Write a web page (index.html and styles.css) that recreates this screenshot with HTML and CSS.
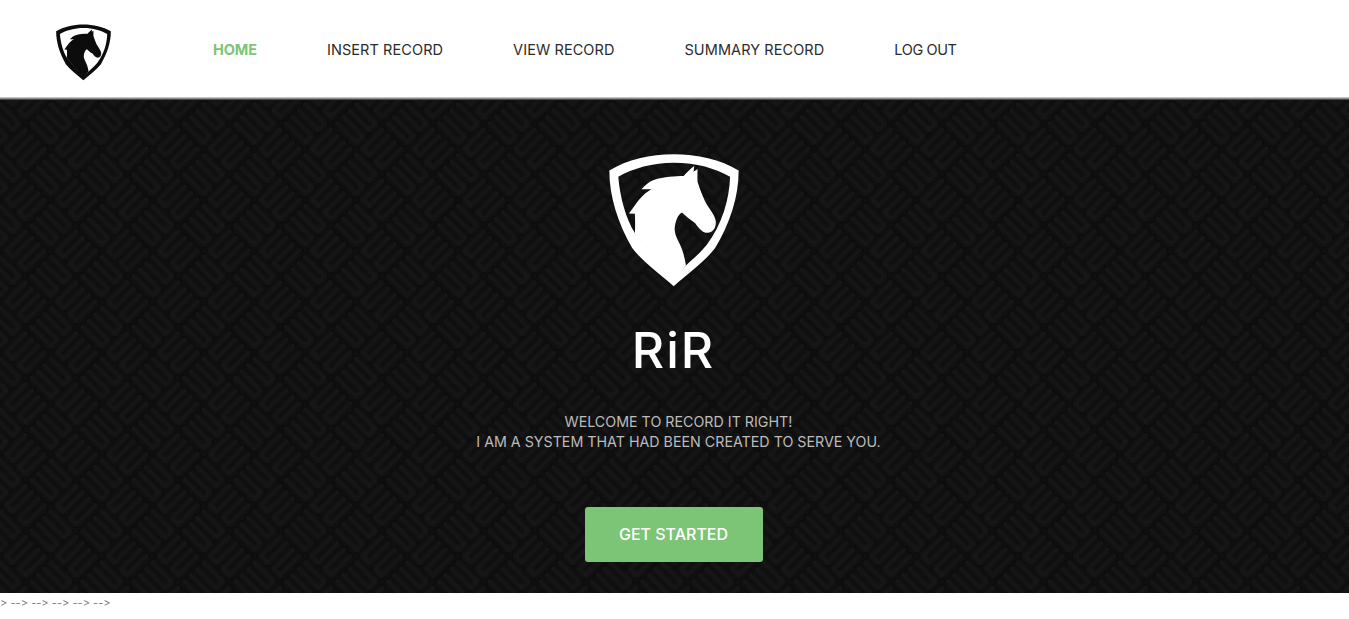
FILE: index.html
```html
<!DOCTYPE html>
<html lang="en">
<head>
  <meta charset="UTF-8">
  <meta name="viewport" content="width=device-width, initial-scale=1.0">
  <title>Record it Right</title>
  <link rel="stylesheet" href="styles.css">
</head>
<body>

  <!-- Logo, used in the header and in the hero -->
  <svg class="defs" width="0" height="0" aria-hidden="true">
    <symbol id="rir-logo" viewBox="55 42 392 400">
      <path fill-rule="evenodd" d="M56 91 C110 58 180 42 250 42 C320 42 392 58 446 91 C446 170 420 250 375 325 C345 365 295 400 250 440 C205 400 155 365 125 325 C82 250 56 170 56 91 Z M83 110 C125 85 190 68 250 68 C320 68 375 85 420 110 C418 180 395 255 350 315 C325 345 305 360 287 378 L250 420 L133 280 C105 235 88 170 83 110 Z"/>
      <path d="M133 282 C134 260 134 240 133 222 L115 221 C125 208 135 192 145 180 C158 165 170 155 183 148 L153 148 C165 135 175 125 190 120 C220 110 255 108 280 108 C290 98 300 86 312 78 L310 95 L322 87 C322 100 321 112 322 125 C330 150 338 170 345 185 C355 205 375 225 377 245 C378 265 368 278 352 279 C338 279 328 268 315 250 C300 240 285 228 275 218 C262 225 254 245 253 270 C255 295 270 310 277 335 C282 350 285 365 287 378 L250 425 Z"/>
    </symbol>
  </svg>

  <header class="topbar">
    <a class="brand" href="#"><svg class="brand-logo"><use href="#rir-logo"/></svg></a>
    <nav class="menu">
      <a class="menu-item active" href="#">HOME</a>
      <a class="menu-item" href="#">INSERT RECORD</a>
      <a class="menu-item" href="#">VIEW RECORD</a>
      <a class="menu-item" href="#">SUMMARY RECORD</a>
      <a class="menu-item tight" href="#">LOG OUT</a>
    </nav>
  </header>

  <section class="hero">
    <!-- Maze texture behind the hero -->
    <svg class="hero-bg" width="100%" height="100%" aria-hidden="true">
      <defs>
        <filter id="soft">
          <feGaussianBlur stdDeviation="0.9"/>
        </filter>
        <pattern id="maze" width="72" height="72" patternUnits="userSpaceOnUse" patternTransform="rotate(45)">
          <rect width="72" height="72" fill="#0f0f0f"/>
          <g filter="url(#soft)">
            <path transform="scale(9)" d="M.5 .5H3.5V1.5H.5M.5 2.5H3.5V3.5H.5M4.5 .5V3.5H5.5V.5M6.5 .5V3.5H7.5V.5M.5 4.5V7.5H1.5V4.5M2.5 4.5V7.5H3.5V4.5M4.5 4.5H7.5V5.5H4.5M4.5 6.5H7.5V7.5H4.5" fill="none" stroke="#171717" stroke-width=".55" stroke-linecap="round" stroke-linejoin="round"/>
          </g>
        </pattern>
      </defs>
      <rect width="100%" height="100%" fill="url(#maze)"/>
    </svg>

    <div class="hero-content">
      <svg class="hero-logo"><use href="#rir-logo"/></svg>
      <h1 class="hero-title">RiR</h1>
      <p class="hero-text">WELCOME TO RECORD IT RIGHT!<br>I AM A SYSTEM THAT HAD BEEN CREATED TO SERVE YOU.</p>
      <a class="hero-button" href="#">GET STARTED</a>
    </div>
  </section>

  <div class="stray">&gt; --&gt; --&gt; --&gt; --&gt; --&gt;</div>

</body>
</html>
```

FILE: styles.css
```css
/* Base */
body {
  margin: 0;
  background-color: #fff;
  font-family: Inter, "Open Sans", sans-serif;
  color: #333;
  overflow: hidden;
}

a {
  text-decoration: none;
}

.defs {
  display: block;
  height: 0;
}

/* Header */
.topbar {
  display: flex;
  align-items: center;
  height: 97px;
  padding-left: 56px;
  background-color: #fff;
  border-bottom: 1px solid #c4c4c4;
}

.brand {
  display: flex;
  margin-right: 102px;
}

.brand-logo {
  display: block;
  width: 55px;
  height: 57px;
  margin-top: 7px;
  fill: #0c0c0c;
}

.menu {
  display: flex;
  gap: 70px;
  margin-top: 2px;
}

.menu-item {
  font-size: 14.5px;
  letter-spacing: 0.08px;
  color: #2b2b2b;
}

.menu-item.active {
  font-weight: 700;
  letter-spacing: -0.1px;
  color: #7cc576;
}

.menu-item.tight {
  letter-spacing: -0.4px;
}

/* Hero */
.hero {
  position: relative;
  height: 495px;
}

.hero-bg {
  position: absolute;
  top: 0;
  left: 0;
}

/* Grey edge under the header */
.hero::before {
  content: "";
  position: absolute;
  z-index: 1;
  top: 0;
  left: 0;
  right: 0;
  height: 1px;
  background-color: #8a8a8a;
  box-shadow: 0 1px 0 #4a4a4a;
}

.hero-content {
  position: relative;
  display: flex;
  flex-direction: column;
  align-items: center;
  padding: 56px 2px 0 0;
}

.hero-logo {
  display: block;
  width: 130px;
  height: 133px;
  fill: #fff;
}

.hero-title {
  margin: 28px 0 0;
  font-size: 50px;
  font-weight: 450;
  line-height: 70px;
  letter-spacing: 2px;
  color: #fff;
}

.hero-text {
  margin: 27px 0 0;
  padding-left: 10px;
  font-size: 14.25px;
  line-height: 20px;
  text-align: center;
  color: #bcbcbc;
}

.hero-button {
  display: flex;
  align-items: center;
  justify-content: center;
  box-sizing: border-box;
  width: 178px;
  height: 55px;
  margin-top: 55px;
  padding-bottom: 2px;
  border-radius: 3px;
  background-color: #7cc576;
  font-size: 16px;
  font-weight: 500;
  color: #fff;
}

/* Leftover text under the hero */
.stray {
  font-size: 11.1px;
  font-variant-ligatures: none;
  font-feature-settings: "calt" 0;
  line-height: 20px;
  color: #808080;
}
```
